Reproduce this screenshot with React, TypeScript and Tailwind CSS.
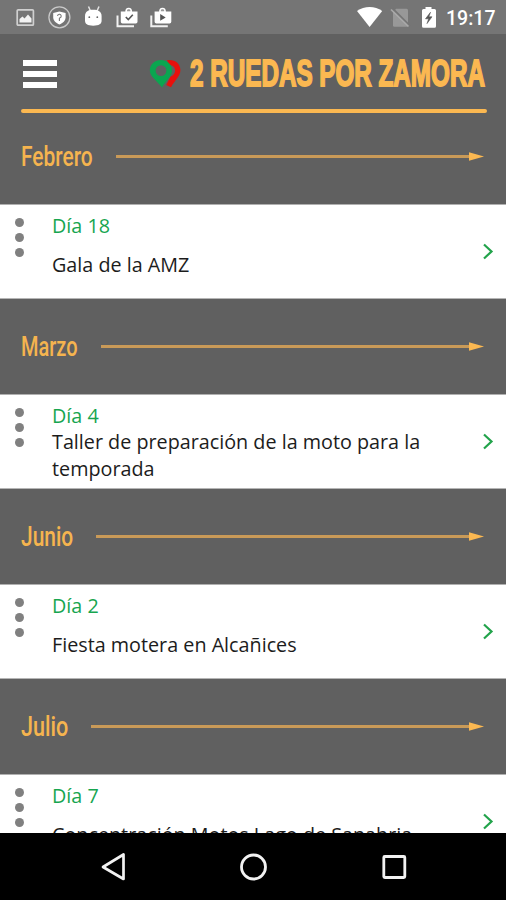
type CalendarEvent = { day: string; title: string; compact?: boolean }
type Month = { name: string; nameCls: string; boxCls: string; event: CalendarEvent }

const MONTHS: Month[] = [
  { name: 'Febrero', nameCls: 'scale-x-[0.775]', boxCls: 'w-[95px]', event: { day: 'Día 18', title: 'Gala de la AMZ' } },
  { name: 'Marzo', nameCls: 'scale-x-[0.74]', boxCls: 'w-[80px]', event: { day: 'Día 4', title: 'Taller de preparación de la moto para la temporada', compact: true } },
  { name: 'Junio', nameCls: 'scale-x-[0.775]', boxCls: 'w-[75px]', event: { day: 'Día 2', title: 'Fiesta motera en Alcañices' } },
  { name: 'Julio', nameCls: 'scale-x-[0.8]', boxCls: 'w-[70px]', event: { day: 'Día 7', title: 'Concentración Motos Lago de Sanabria' } },
]

function StatusBar() {
  return (
    <div className="flex h-[34px] shrink-0 items-center bg-[#757575] pl-4 pr-[9px]">
      <svg width="160" height="34" viewBox="0 0 160 34" fill="none">
        {/* gallery */}
        <rect x="1.2" y="9.8" width="16.2" height="15.4" rx="1" stroke="#d0d0d0" strokeWidth="1.7" />
        <path d="M3.5 22.5v-3.5l3-2.5 2 2 3.5-4 3.5 4v4z" fill="#f2f2f2" />
        {/* shield */}
        <circle cx="43.4" cy="17.3" r="10.5" stroke="#c9c9c9" strokeWidth="1.3" />
        <path d="M43.4 11.5l6.2 1.5v4.2c0 3.6-2.9 6-6.2 7.3-3.3-1.3-6.2-3.7-6.2-7.3v-4.2z" fill="#fff" />
        <path d="M41.6 16a1.8 1.8 0 1 1 2.5 1.7l-.7.6v2.8" stroke="#777" strokeWidth="1.1" />
        {/* android head */}
        <path d="M72.5 6.5l2 4.5M83 6.5l-2 4.5" stroke="#e5e5e5" strokeWidth="1.5" />
        <path d="M69 16c0-4.5 3.4-6.3 8.2-6.3s8.4 1.8 8.4 6.3v4.5c0 3.4-2.5 5.2-8.4 5.2s-8.2-1.8-8.2-5.2z" fill="#fff" />
        <circle cx="73.3" cy="17.2" r=".9" fill="#666" />
        <circle cx="81.3" cy="17.2" r=".9" fill="#666" />
        {/* store updates */}
        <path d="M101.5 15.5v10.8h16.5" stroke="#f2f2f2" strokeWidth="2" />
        <path d="M104.8 11.5h4.5c0-2.5 1-3.8 3.4-3.8s3.4 1.3 3.4 3.8h5.4v10.3q0 1.8-1.8 1.8h-13.1q-1.8 0-1.8-1.8z" fill="#fff" />
        <path d="M111 11.3c0-1.4.4-2 1.7-2s1.7.6 1.7 2z" fill="#999" />
        <path d="M109.8 17l2.5 2.5 4.5-4.7" stroke="#555" strokeWidth="1.6" />
        <path d="M135.3 15.5v10.8h16.5" stroke="#f2f2f2" strokeWidth="2" />
        <path d="M138.6 11.5h4.5c0-2.5 1-3.8 3.4-3.8s3.4 1.3 3.4 3.8h5.4v10.3q0 1.8-1.8 1.8h-13.1q-1.8 0-1.8-1.8z" fill="#fff" />
        <path d="M144.8 11.3c0-1.4.4-2 1.7-2s1.7.6 1.7 2z" fill="#999" />
        <path d="M144.2 14l5.5 3.4-5.5 3.4z" fill="#555" />
      </svg>
      <svg className="ml-auto mr-[10px]" width="82" height="34" viewBox="354 0 82 34" fill="none">
        <path d="M357 11c7.3-5.3 18-5.3 25.2 0L369.6 27z" fill="#fff" />
        {/* no sim */}
        <path d="M396.2 8.7h10.3q1.5 0 1.5 1.5v15.3q0 1.2-1.5 1.2h-12q-1.5 0-1.5-1.2V12z" fill="#989898" />
        <path d="M392.5 8.5l17.5 17.5" stroke="#757575" strokeWidth="2" />
        <path d="M391 9.5l17.5 17" stroke="#a9a9a9" strokeWidth="1.7" />
        {/* battery */}
        <path d="M425.5 7h6v2h3q1.5 0 1.5 1.5v15.7q0 1.6-1.5 1.6h-11q-1.5 0-1.5-1.6V10.5q0-1.5 1.5-1.5h2z" fill="#fff" />
        <path d="M430.5 12.3l-5 6.5h3.2l-1.7 4.8 5-6.8h-3.2z" fill="#555" stroke="#555" strokeWidth=".6" />
      </svg>
      <span className="w-[51px] whitespace-nowrap pt-[3px] font-[Roboto,sans-serif] text-[19.5px] font-medium leading-none text-white">19:17</span>
    </div>
  )
}

function Header() {
  return (
    <header className="flex h-[78px] shrink-0 flex-col px-5">
      <div className="flex h-[75px] shrink-0 items-center">
        <button type="button" aria-label="Menú" className="ml-[3px] mt-[4px] flex w-[34px] flex-col gap-[5px]">
          <span className="h-[6px] bg-white" />
          <span className="h-[6px] bg-white" />
          <span className="h-[6px] bg-white" />
        </button>
        <svg className="ml-[92px] mt-[3px] shrink-0" width="34" height="30" viewBox="149 58 34 30" fill="none">
          <path d="M167 60.2c7.5-1.2 13.4 3.2 13.4 9.8 0 6-4.6 9-9.4 17.2l-4.8-2.2 4.3-8.2c3.3-1.8 4.6-3.6 4.6-6.3 0-3.5-2.9-5.7-6.1-5.6z" fill="#e8100c" />
          <path fillRule="evenodd" d="M161 60c6.3 0 11 4.5 11 10.3 0 6.2-5.5 9.5-10 17.2-6-7.7-12.2-11-12.2-17.2C149.8 64.5 154.7 60 161 60zm0 5.2a5.4 5.4 0 1 0 0 10.8 5.4 5.4 0 0 0 0-10.8z" fill="#0aa650" />
        </svg>
        <h1 className="ml-[7px] mt-[4px] w-[296px] whitespace-nowrap font-['Liberation_Sans',sans-serif] text-[37px] font-bold leading-none text-[#fbb851]">
          <span className="inline-block origin-left scale-x-[0.655] [-webkit-text-stroke:1.8px_#fbb851]">2 RUEDAS POR ZAMORA</span>
        </h1>
      </div>
      <div className="ml-px h-[4px] w-[466px] shrink-0 rounded-full bg-[#fbb851]" />
    </header>
  )
}

function MonthBar({ month }: { month: Month }) {
  return (
    <div className="flex h-[95px] items-center pl-[21px] pr-[22px]">
      <h2 className={`shrink-0 pt-[2px] ${month.boxCls} whitespace-nowrap font-[Roboto,sans-serif] text-[27px] font-medium leading-none text-[#f5b44f]`}>
        <span className={`inline-block origin-left ${month.nameCls}`}>{month.name}</span>
      </h2>
      <div className="h-[3px] flex-1 bg-[#c99a58]" />
      <svg width="15" height="9" viewBox="0 0 15 9" className="shrink-0">
        <path d="M0 .3L15 4.5L0 8.7z" fill="#fbb851" />
      </svg>
    </div>
  )
}

function EventRow({ event }: { event: CalendarEvent }) {
  return (
    <div className="flex h-[95px] border-y border-t-[#b0b0b0] border-b-[#b5b5b5] bg-white font-['Open_Sans',sans-serif] text-[19.75px]">
      <div className="ml-[15px] mt-[13px] flex w-[9px] flex-col gap-[6px]">
        <span className="size-[9px] rounded-full bg-[#808080]" />
        <span className="size-[9px] rounded-full bg-[#808080]" />
        <span className="size-[9px] rounded-full bg-[#808080]" />
      </div>
      <div className="ml-7 w-[400px] pt-[7px]">
        <p className="leading-[27px] text-[#17a54f]">{event.day}</p>
        <p className={`leading-[26.5px] text-[#1c1c1c] ${event.compact ? '' : 'pt-[12.5px]'}`}>{event.title}</p>
      </div>
      <svg className="ml-[30px] mt-[38px]" width="12" height="17" viewBox="0 0 12 17" fill="none">
        <path d="M2 1.5l7.5 7L2 15.5" stroke="#22a34b" strokeWidth="2.2" />
      </svg>
    </div>
  )
}

function NavBar() {
  return (
    <nav className="flex h-[67px] shrink-0 items-center justify-center bg-black">
      <svg width="310" height="32" viewBox="98 851 310 32" fill="none" stroke="#f2f2f2">
        <path d="M123.5 854.5v24.5L103 867z" strokeWidth="2.7" strokeLinejoin="round" />
        <circle cx="253.5" cy="867" r="12" strokeWidth="2.8" />
        <rect x="383.8" y="856.5" width="21" height="21" rx="1" strokeWidth="2.8" />
      </svg>
    </nav>
  )
}

export default function App() {
  return (
    <div className="flex h-[900px] w-[506px] flex-col overflow-hidden bg-[#606060]">
      <StatusBar />
      <Header />
      <main className="min-h-0 flex-1 overflow-hidden">
        {MONTHS.map((month, i) => (
          <section key={month.name} className={i === 0 ? '-mt-[3px]' : ''}>
            <MonthBar month={month} />
            <EventRow event={month.event} />
          </section>
        ))}
      </main>
      <NavBar />
    </div>
  )
}
